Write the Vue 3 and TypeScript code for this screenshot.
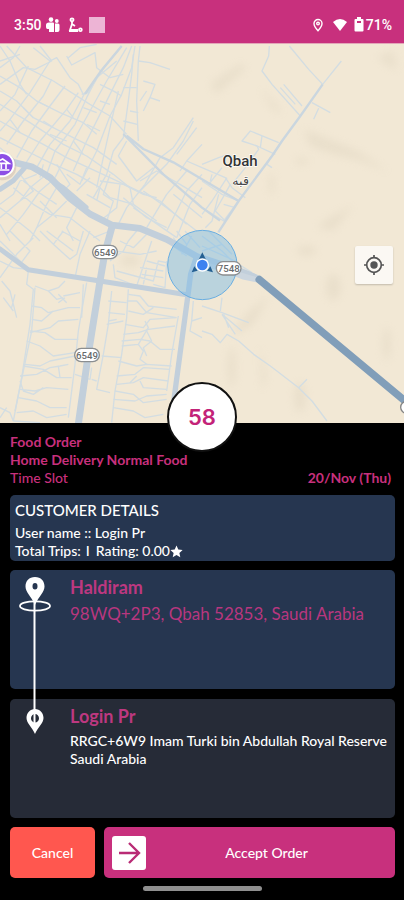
<script setup lang="ts">
interface Order {
  kind: string
  service: string
  date: string
  seconds: number
  pickup: { name: string; address: string }
  dropoff: { name: string; lines: string[] }
}

const order: Order = {
  kind: 'Food Order',
  service: 'Home Delivery Normal Food',
  date: '20/Nov (Thu)',
  seconds: 58,
  pickup: { name: 'Haldiram', address: '98WQ+2P3, Qbah 52853, Saudi Arabia' },
  dropoff: {
    name: 'Login Pr',
    lines: ['RRGC+6W9 Imam Turki bin Abdullah Royal Reserve', 'Saudi Arabia'],
  },
}

// Minor streets, one list per quarter of the map.
const northWest: string[] = [
  'M20 15L80 80L160 120L270 190L330 225L380 280',
  'M0 105L60 140L110 180L180 215L250 245L290 280',
  'M0 150L50 180L100 230L200 280L280 320L350 370',
  'M0 190L90 245L190 310L260 345L340 400L390 440',
  'M0 240L60 275L130 310L200 350L330 410L480 480L560 550',
  'M0 290L80 330L150 365L230 400L300 440L330 470L400 490L470 540',
  'M0 15L30 60L60 130L80 160', 'M60 15L40 50L0 80', 'M0 60L60 40',
  'M100 20L150 60L170 50L210 110L235 130L250 160',
  'M205 50L240 20L290 10M200 45L215 72L285 35L290 80L330 110L370 100',
  'M120 15L155 60L105 85L70 80L0 130', 'M85 75L45 160L0 210',
  'M150 60L90 155L30 235L0 270', 'M155 115L130 165L70 240L20 310',
  'M195 135L150 195L95 270L50 350', 'M235 155L200 205L120 300L75 370',
  'M255 155L210 240L150 310L110 380', 'M365 15L310 80L265 155L245 160',
  'M350 60L290 110L260 170L225 250L165 330L140 400',
  'M380 20L320 120L270 210L220 300L180 380L165 410',
  'M395 15L370 80L310 200L260 300L220 390',
  'M405 15L395 80L365 160L330 225L290 330L245 420',
  'M400 40L395 100L385 180L370 290L340 330L320 400L280 470',
  'M420 15L415 60L410 180L415 300', 'M355 150L330 260L310 350L290 440',
  'M415 60L450 65L510 85', 'M370 140L410 140M340 150L365 165M300 130L350 155M390 210L415 215M370 240L412 250M300 180L330 190',
  'M430 120L465 130L450 170L430 210M450 170L480 180', 'M440 150L420 180',
  'M580 230L520 320L480 350M590 260L530 340', 'M580 240L550 300L500 370L420 450',
  'M355 345L380 300M355 345L410 420L460 380', 'M480 350L435 430L380 500L350 560',
  'M606 310L560 360L540 390', 'M560 390L500 460L440 560', 'M606 400L560 450L500 570', 'M606 440L570 490L530 590',
  'M606 380L560 360M606 470L540 430L470 390L420 420M520 460L606 530M430 450L500 500L590 570M400 500L530 590M370 470L440 530L500 560',
  'M300 420L370 430L430 460L470 470', 'M330 400L310 460L340 480L320 540M360 430L350 500L300 540M390 440L400 490',
  'M0 320L40 355M30 235L60 275M70 200L100 230M110 180L150 200M130 240L160 260M200 205L220 230M150 280L200 300M250 200L290 215M260 250L300 270M220 300L250 340M200 400L240 430L260 380M120 410L130 370M170 370L210 430L190 450M230 450L270 410M260 460L330 500M290 480L300 440',
  'M0 490L40 460L60 420L110 400M0 530L60 480L90 440L140 400M20 580L70 520L120 450L155 420M40 440L100 490L150 520L210 530L300 600M0 500L40 530L90 570L120 600M70 420L110 450L170 490M170 440L140 490L110 560L90 600M200 480L160 520L110 560M0 550L30 600M230 500L200 560L220 600M120 480L170 530M60 400L100 450L60 480',
]
const northEast: string[] = [
  'M202 15L200 45L180 90L210 130L295 225', 'M262 15L320 85L362 130', 'M245 130L300 195M235 140L280 190',
  'M330 185L385 215M350 202L335 235', 'M418 60L362 130', 'M230 305L145 270L120 300L165 315L170 325L130 380L90 430',
  'M175 320L180 285M165 315L220 340M205 350L195 370L210 380', 'M0 370L50 350L80 340M0 380L70 410L90 440L130 470',
  'M110 480L60 460L0 420M75 410L30 480L0 520M60 380L20 430M110 480L65 540L0 500M65 490L100 500M50 460L30 540L10 560M30 400L25 420M85 430L40 510L70 540',
]
const southWest: string[] = [
  'M0 30L40 70L85 115M0 90L40 110L80 115M0 140L50 70L100 20M30 0L90 60L60 100M85 120L80 160L100 175L90 280L65 440L40 570',
  'M105 170L95 300L70 420L45 540', 'M260 155L235 300L225 400L205 560', 'M250 160L245 260',
  'M120 0L160 40L210 85L230 70L250 0M140 0L220 60M185 0L240 30M160 40L190 0M270 0L240 70L225 140M280 20L330 0',
  'M105 165L145 180L175 170L195 150M145 180L170 205L190 200M175 190L200 215M190 195L240 185M175 215L195 200',
  'M95 225L125 230L145 245L205 230L240 230M95 265L125 270L160 240', 'M90 300L135 305L165 325L235 325M90 305L150 290L175 270L235 265',
  'M80 330L120 345L160 375L225 365M75 400L120 405L150 390L225 375', 'M70 405L130 415L170 440L215 440M60 435L110 430L150 410L180 405L205 400M175 405L180 440',
  'M60 475L105 480L140 470L205 475M55 500L110 510L150 530L200 530M60 450L70 480L100 490L130 470', 'M50 545L100 540L140 560L200 550M40 570L120 575',
  'M0 530L30 545L40 570M0 560L20 530', 'M5 150L30 180L50 260M10 200L40 240M45 190L35 230',
  'M335 180L325 280L310 370L290 475L330 485M385 175L380 260L365 370L345 480L335 575', 'M325 210L380 215M325 245L375 250M320 280L370 270M325 270L350 265M305 375L365 380M225 430L270 445L275 410M275 445L290 450',
  'M385 190L420 195L445 225L530 235M385 240L430 250L460 230', 'M380 210L410 210L440 245L530 260M375 280L430 290L450 265L530 260',
  'M370 310L415 305L445 295L525 285M365 330L420 325L450 330L480 355L525 355', 'M365 345L415 340L445 290L435 270M440 300L455 330L430 350L440 375M415 340L430 360L420 385L440 400',
  'M355 390L410 405L440 400L515 405M350 435L405 430L430 410L510 415', 'M350 460L400 455L430 440L505 450M345 480L400 490L430 515L500 505',
  'M340 505L405 510L440 495L500 490M340 530L400 540L435 560L490 550M390 455L410 435M420 450L430 470L500 475', 'M535 255L515 370L500 480M575 270L570 300L606 320M580 210L575 270L606 260',
  'M340 100L345 140L410 165L455 30M330 90L370 60L385 30L410 0M360 30L400 50L440 10M350 120L460 150L475 90L500 95M420 110L490 120M425 130L490 140M440 90L495 105M430 160L440 110M460 160L495 170L500 90M345 60L420 70L470 60',
  'M530 0L560 40M555 0L600 50M500 30L560 75M520 20L540 50M575 15L545 70',
]
const southEast: string[] = [
  'M0 300L30 310L55 335L75 310L110 330L155 370L205 405L290 470L330 510L375 570', 'M290 470L315 445',
  'M0 225L60 245L140 275M60 250L100 310M65 250L80 290M60 200L55 240M60 250L120 300', 'M0 15L60 60L100 100M20 0L90 70M0 60L60 40M0 45L100 90M110 100L150 125',
]
const tracks: { x: number; y: number; paths: string[] }[] = [
  { x: 0, y: -9, paths: northWest },
  { x: 606, y: -9, paths: northEast },
  { x: 0, y: 561, paths: southWest },
  { x: 606, y: 561, paths: southEast },
]

const shields: { x: number; y: number; label: string }[] = [
  { x: 315, y: 624, label: '6549' },
  { x: 261, y: 933, label: '6549' },
  { x: 686, y: 673, label: '7548' },
]
</script>

<template>
  <div class="screen">
    <header class="status">
      <div class="status-side">
        <span>3:50</span>
        <svg class="ic" width="14" height="16" viewBox="0 0 14 16" fill="#fff" aria-hidden="true">
          <circle cx="5" cy="2.600" r="2.300" /><circle cx="10.800" cy="4" r="1.900" />
          <path d="M3 5.500h4q1 0 1 1V15H3v-3H1.500Q0 12 0 10V8q0-2.500 3-2.500zM9 6.500h3q1.500 0 1.500 1.500v5q0 2-2 2H9z" />
        </svg>
        <svg class="ic gap-l" width="15" height="16" viewBox="0 0 15 16" fill="none" stroke="#fff" stroke-width="1.800" aria-hidden="true">
          <circle cx="4" cy="2.800" r="1.500" /><path d="M4 4v3L2 13h8M4 7l3 2M1 14h9" /><circle cx="12.400" cy="12.700" r="1.400" />
        </svg>
        <span class="square"></span>
      </div>
      <div class="status-side">
        <svg class="ic" width="12" height="14" viewBox="0 0 12 14" fill="none" stroke="#fff" stroke-width="1.400" aria-hidden="true">
          <path d="M6 12.700C3 9.500 2 7.500 2 5.500a4 4 0 0 1 8 0C10 7.500 9 9.500 6 12.700z" /><circle cx="6" cy="5.600" r="1.300" />
        </svg>
        <svg class="ic gap-l" width="16" height="14" viewBox="0 0 16 14" fill="#fff" aria-hidden="true">
          <path d="M1 4Q8-2 15 4L8 13z" />
        </svg>
        <svg class="ic battery" width="10" height="15" viewBox="0 0 10 15" aria-hidden="true">
          <path fill="#fff" d="M3 0h4v2h1.500q1 0 1 1v10.500q0 1-1 1h-7q-1 0-1-1V3q0-1 1-1H3z" /><path fill="#c8307d" d="M3 4h4v2H3z" />
        </svg>
        <span>71%</span>
      </div>
    </header>

    <section class="map" aria-label="Map">
      <svg class="map-art" viewBox="0 0 1212 1137" preserveAspectRatio="xMidYMid slice">
        <defs>
          <filter id="relief" x="-30%" y="-30%" width="160%" height="160%"><feGaussianBlur stdDeviation="12" /></filter>
        </defs>
        <rect width="1212" height="1140" fill="#f2e8d5" />
        <g filter="url(#relief)" fill="#d9cfb9" opacity=".35">
          <path d="M910 255L1070 320L1170 385L1080 350L1000 330L930 305z" />
          <path d="M780 130L850 205L820 200z" /><path d="M700 860L750 800L810 750L760 840L710 870z" />
          <ellipse cx="905" cy="352" rx="20" ry="10" /><ellipse cx="815" cy="420" rx="8" ry="34" />
          <path d="M950 550L990 520L1060 485L1000 560z" /><path d="M780 900L800 1000L785 1040z" />
          <path d="M630 120L720 60L740 70L650 150z" /><ellipse cx="1160" cy="900" rx="12" ry="50" />
          <ellipse cx="695" cy="970" rx="12" ry="60" /><path d="M1130 40L1180 20L1190 80z" />
          <ellipse cx="1000" cy="730" rx="22" ry="40" /><ellipse cx="390" cy="650" rx="30" ry="18" />
          <ellipse cx="920" cy="620" rx="30" ry="15" /><ellipse cx="900" cy="1060" rx="18" ry="45" />
        </g>
        <g class="streets">
          <g v-for="(t, i) in tracks" :key="i" :transform="`translate(${t.x} ${t.y})`">
            <path v-for="(d, j) in t.paths" :key="j" :d="d" />
          </g>
        </g>
        <g class="avenues">
          <path d="M380 275L430 315L520 355L606 406L716 471M370 270L490 391L606 491L660 530M968 121L901 216L846 291L816 336L716 471L655 565" />
          <path d="M365 6L300 85L255 150" />
        </g>
        <g class="roads">
          <path stroke-width="15" d="M0 436L40 410L75 370" />
          <path stroke-width="20" d="M40 355L95 368L150 400L210 463L270 510L335 543L420 553L500 586L590 637L700 673L770 702" />
          <path stroke-width="12" d="M140 400L190 430L260 490" />
          <path stroke-width="15" d="M0 615L85 677L300 711L420 730L560 752" />
          <path stroke-width="21" d="M337 545L315 625L300 711L265 930L235 1140" />
          <path stroke-width="16" d="M590 637L572 690L563 760L540 930L512 1140" />
        </g>
        <path d="M595 655L780 710L730 700L660 672" fill="none" stroke="#ccd6df" stroke-width="14" />
        <path d="M778 707L1220 1075" fill="none" stroke="#819eb9" stroke-width="23" stroke-linecap="round" />
        <circle cx="607" cy="663" r="104" fill="#72b9e8" fill-opacity=".44" stroke="#69aee2" stroke-width="3" />
        <g fill="#245f91"><path d="M607 625l-12 24h24zM583 667l-8 18 18-5zM631 667l8 18-18-5z" /></g>
        <circle cx="607" cy="663" r="20" fill="#fff" /><circle cx="607" cy="663" r="16" fill="#3e82f0" />
        <g v-for="(s, i) in shields" :key="i">
          <rect :x="s.x - 37" :y="s.y - 20" width="74" height="40" rx="20" fill="#fff" stroke="#8b8e90" stroke-width="4" />
          <text :x="s.x" :y="s.y + 11" class="shield">{{ s.label }}</text>
        </g>
        <circle cx="1220" cy="1090" r="18" fill="#fff" stroke="#858585" stroke-width="4" />
        <circle cx="8" cy="368" r="41" fill="#c9b9ad" opacity=".5" />
        <circle cx="6" cy="362" r="38" fill="#fff" /><circle cx="6" cy="362" r="32" fill="#8d4ee5" />
        <path d="M-18 358L8 345L27 358zM-10 361v14M4 361v14M18 361v14M-16 378h44" fill="none" stroke="#fff" stroke-width="5" />
        <text x="720" y="367" class="place">Qbah</text>
        <text x="722" y="424" class="place-ar">قبه</text>
      </svg>
      <button class="locate" type="button" aria-label="My location">
        <svg width="22" height="22" viewBox="0 0 22 22" fill="none" stroke="#555" stroke-width="1.700" aria-hidden="true">
          <circle cx="11" cy="11" r="7.300" /><circle cx="11" cy="11" r="3.700" fill="#555" stroke="none" />
          <path d="M11 1v3M11 18v3M1 11h3M18 11h3" />
        </svg>
      </button>
      <div class="timer">{{ order.seconds }}</div>
    </section>

    <main class="panel">
      <section class="summary">
        <strong>{{ order.kind }}</strong>
        <strong>{{ order.service }}</strong>
        <div class="slot"><span>Time Slot</span><strong>{{ order.date }}</strong></div>
      </section>

      <section class="card customer">
        <h2>CUSTOMER DETAILS</h2>
        <p>User name :: Login Pr</p>
        <p class="stats">
          <span>Total Trips:</span><span class="bar">I</span><span>Rating: 0.00</span>
          <svg width="13" height="13" viewBox="0 0 24 24" fill="#fff" aria-hidden="true">
            <path d="M12 1l3.300 7.400 8 .8-6 5.400 1.700 7.900L12 18.400 5 22.500l1.700-7.900-6-5.400 8-.8z" />
          </svg>
        </p>
      </section>

      <section class="stops">
        <article class="card stop pickup">
          <h3>{{ order.pickup.name }}</h3>
          <p>{{ order.pickup.address }}</p>
        </article>
        <article class="card stop dropoff">
          <h3>{{ order.dropoff.name }}</h3>
          <p v-for="line in order.dropoff.lines" :key="line">{{ line }}</p>
        </article>
        <svg class="trail" width="32" height="160" viewBox="0 0 32 160" aria-hidden="true">
          <ellipse cx="16" cy="30" rx="15" ry="4.700" fill="none" stroke="#fff" stroke-width="1.800" />
          <path d="M15.500 25V137" stroke="#fff" stroke-width="2" />
          <path fill="#fff" fill-rule="evenodd" d="M16 1C10 1 6.500 5 6.500 10.500C6.500 16 12 20 16 29C20 20 25.500 16 25.500 10.500C25.500 5 22 1 16 1zM16 7a2.500 3.300 0 1 1 0 6.600a2.500 3.300 0 1 1 0-6.600z" />
          <path fill="#fff" fill-rule="evenodd" d="M16 133C11 133 7.500 137 7.500 142C7.500 147 13 151 16 158C19 151 24.500 147 24.500 142C24.500 137 21 133 16 133zM16 138a4 4.300 0 1 1 0 8.600a4 4.300 0 1 1 0-8.600z" />
          <path d="M15.500 137v10" stroke="#fff" stroke-width="2" />
        </svg>
      </section>

      <div class="actions">
        <button class="cancel" type="button">Cancel</button>
        <button class="accept" type="button">
          <span class="arrow">
            <svg width="24" height="24" viewBox="0 0 24 24" fill="none" stroke="#b92b75" stroke-width="2.400" aria-hidden="true">
              <path d="M2 12h19M12 2l10 10-10 10" />
            </svg>
          </span>
          <span class="accept-label">Accept Order</span>
        </button>
      </div>
      <div class="home-bar"></div>
    </main>
  </div>
</template>

<style>
body { background: #000; }
</style>

<style scoped>
* { box-sizing: border-box; }
.screen {
  min-height: 100vh;
  display: flex;
  flex-direction: column;
  background: #000;
  color: #fff;
  font-family: Lato, "Noto Sans", sans-serif;
  font-weight: 500;
}
h2, h3, p { margin: 0; }
button { border: 0; padding: 0; font-family: inherit; font-weight: inherit; color: #fff; cursor: pointer; }
.status {
  height: 43px;
  padding: 6px 12px 0 14px;
  background: #c8307d;
  display: flex;
  justify-content: space-between;
  align-items: center;
  font: 500 14px/18px Roboto, sans-serif;
}
.status-side { display: flex; align-items: center; gap: 4px; }
.gap-l { margin-left: 4px; }
.battery { margin: 0 -2px 0 2px; }
.square { width: 16px; height: 16px; margin-left: 2px; background: #edb4d5; }
.map { position: relative; width: 100%; aspect-ratio: 404 / 380; border-top: 1px solid #e2a6b8; }
.map-art { display: block; width: 100%; height: 100%; }
.streets { fill: none; stroke: #d3dde2; stroke-width: 4; stroke-linejoin: round; }
.avenues { fill: none; stroke: #cad6df; stroke-width: 7; stroke-linejoin: round; }
.roads { fill: none; stroke: #c2cfdb; stroke-linejoin: round; stroke-linecap: round; }
.shield { font: 500 29px Roboto, sans-serif; fill: #686b6d; text-anchor: middle; }
.place { font: 500 45px Roboto, sans-serif; fill: #333; text-anchor: middle; stroke: #fff; stroke-width: 4px; paint-order: stroke; }
.place-ar { font: 38px "DejaVu Sans", sans-serif; fill: #444; text-anchor: middle; stroke: #fff; stroke-width: 4px; paint-order: stroke; }
.locate {
  position: absolute;
  right: 11px;
  top: 202px;
  width: 38px;
  height: 38px;
  display: grid;
  place-items: center;
  background: #fbf8f3;
  border-radius: 2px;
  box-shadow: 0 1px 2px #0003;
}
.timer {
  position: absolute;
  left: 50%;
  bottom: -29px;
  width: 70px;
  height: 70px;
  transform: translateX(-50%);
  display: grid;
  place-items: center;
  border: 2px solid #111;
  border-radius: 50%;
  background: #fff;
  color: #c32378;
  font: 600 22px/24px Inter, sans-serif;
}
.panel { flex: 1; display: flex; flex-direction: column; padding: 10px 9px 9px 10px; }
.summary { display: flex; flex-direction: column; color: #c8307d; font-size: 14px; line-height: 18px; }
.slot { display: flex; justify-content: space-between; padding-right: 4px; }
.card { border-radius: 5px; }
.customer { margin-top: 8px; padding: 5px 5px 1px; background: #263650; font-size: 14px; line-height: 18px; }
.customer h2 { font-size: 15px; font-weight: 500; line-height: 20px; margin-bottom: 4px; }
.stats { display: flex; align-items: center; }
.bar { margin: 0 6px 0 5px; }
.stops { position: relative; display: grid; gap: 10px; margin-top: 9px; }
.stop { min-height: 119px; padding: 5px 4px 5px 60px; }
.stop h3 { font-size: 18px; line-height: 24px; color: #bd3880; }
.pickup { background: #263650; color: #b8377f; }
.pickup p { font-size: 17px; font-weight: 400; line-height: 22px; margin-top: 4px; }
.dropoff { background: #262b37; font-size: 14px; line-height: 18px; }
.dropoff h3 { margin-bottom: 4px; }
.trail { position: absolute; left: 9px; top: 6px; }
.actions { display: flex; gap: 9px; margin-top: 9px; }
.cancel, .accept { height: 51px; border-radius: 5px; font-size: 14px; }
.cancel { width: 85px; background: #ff574f; }
.accept { flex: 1; display: flex; align-items: center; padding: 0 8px; background: #c8307d; }
.arrow { width: 34px; height: 34px; display: grid; place-items: center; background: #fff; border-radius: 3px; }
.accept-label { flex: 1; text-align: center; }
.home-bar { width: 119px; height: 5px; margin: 8px auto 0; border-radius: 3px; background: #8f8f8f; }
</style>
